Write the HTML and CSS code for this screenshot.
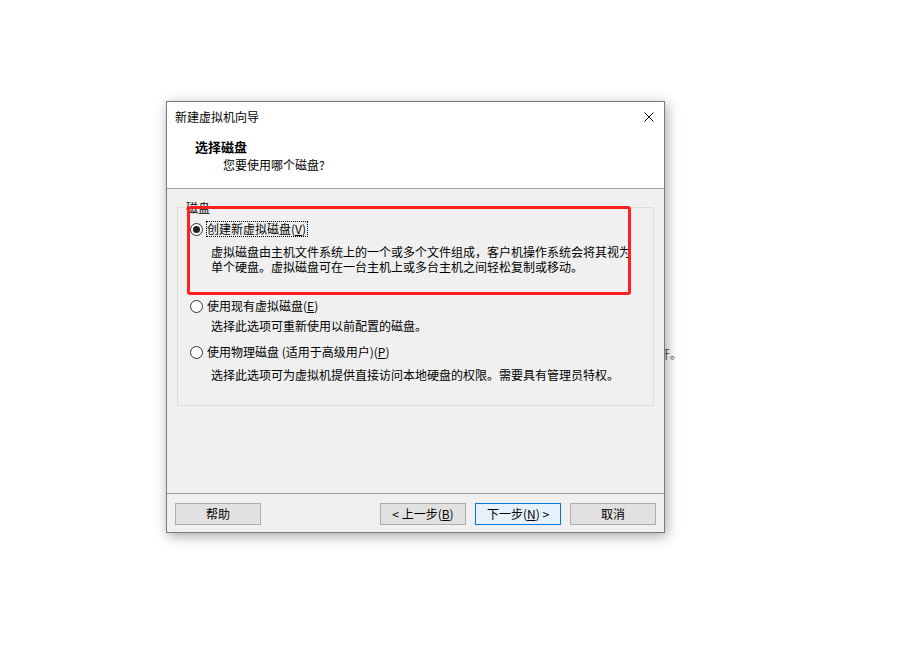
FILE: index.html
```html
<!DOCTYPE html>
<html lang="zh-CN">
<head>
<meta charset="utf-8">
<title>新建虚拟机向导</title>
<link rel="stylesheet" href="styles.css">
</head>
<body>
<div class="desktop">
  <div class="bg-text">打开。</div>
  <div class="dialog">
    <div class="header">
      <div class="titlebar">
        <span class="title">新建虚拟机向导</span>
        <svg class="close" width="10" height="10" viewBox="0 0 10 10"><path d="M0.5 0.5L9.5 9.5M9.5 0.5L0.5 9.5" stroke="#000" stroke-width="1" fill="none"/></svg>
      </div>
      <div class="heading">选择磁盘</div>
      <div class="subheading">您要使用哪个磁盘?</div>
    </div>
    <div class="body">
      <div class="group">
        <div class="group-label">磁盘</div>
        <div class="option opt1">
          <span class="radio checked"></span><span class="opt-text focus">创建新虚拟磁盘(<u>V</u>)</span>
        </div>
        <div class="desc desc1">虚拟磁盘由主机文件系统上的一个或多个文件组成，客户机操作系统会将其视为<br>单个硬盘。虚拟磁盘可在一台主机上或多台主机之间轻松复制或移动。</div>
        <div class="option opt2">
          <span class="radio"></span><span class="opt-text">使用现有虚拟磁盘(<u>E</u>)</span>
        </div>
        <div class="desc desc2">选择此选项可重新使用以前配置的磁盘。</div>
        <div class="option opt3">
          <span class="radio"></span><span class="opt-text">使用物理磁盘 (适用于高级用户)(<u>P</u>)</span>
        </div>
        <div class="desc desc3">选择此选项可为虚拟机提供直接访问本地硬盘的权限。需要具有管理员特权。</div>
      </div>
    </div>
    <div class="footer">
      <button class="btn help">帮助</button>
      <button class="btn">&lt; 上一步(<u>B</u>)</button>
      <button class="btn default">下一步(<u>N</u>) &gt;</button>
      <button class="btn">取消</button>
    </div>
    <div class="annot"></div>
  </div>
</div>
</body>
</html>
```
FILE: styles.css
```css
* { box-sizing: border-box; }
html, body {
  margin: 0;
  padding: 0;
  background: #ffffff;
}
body {
  font-family: "Noto Sans CJK SC", "Noto Sans", sans-serif;
  font-size: 12px;
  color: #000;
}
.desktop {
  position: relative;
  width: 923px;
  height: 652px;
  overflow: hidden;
}
.bg-text {
  position: absolute;
  left: 646px;
  top: 346px;
  line-height: 16px;
  color: #555;
}
.dialog {
  position: absolute;
  left: 166px;
  top: 101px;
  width: 499px;
  height: 432px;
  border: 1px solid #7a7a7a;
  background: #f0f0f0;
  display: flex;
  flex-direction: column;
  box-shadow: 2px 3px 12px rgba(0, 0, 0, 0.35);
}
.header {
  height: 87px;
  background: #ffffff;
  border-bottom: 1px solid #a0a0a0;
  flex: none;
}
.titlebar {
  height: 30px;
  display: flex;
  align-items: center;
  justify-content: space-between;
  padding: 0 10px 0 8px;
}
.title { line-height: 16px; }
.close { display: block; }
.heading {
  margin-top: 6px;
  padding-left: 28px;
  line-height: 18px;
  font-size: 13px;
  font-weight: bold;
}
.subheading {
  padding-left: 56px;
  line-height: 18px;
}
.body {
  flex: 1;
  padding: 18px 10px 0 10px;
}
.group {
  border: 1px solid #dcdcdc;
  height: 199px;
}
.group-label {
  margin: -8px 0 0 7px;
  width: fit-content;
  padding: 0 1px;
  background: #f0f0f0;
  line-height: 16px;
}
.option {
  display: flex;
  align-items: center;
  height: 16px;
  margin-left: 12px;
}
.opt1 { margin-top: 5px; }
.opt2 { margin-top: 24px; }
.opt3 { margin-top: 11px; }
.radio {
  width: 13px;
  height: 13px;
  border: 1px solid #333;
  border-radius: 50%;
  background: #fff;
  margin-right: 3px;
  display: flex;
  align-items: center;
  justify-content: center;
  flex: none;
}
.radio.checked::after {
  content: "";
  width: 7px;
  height: 7px;
  border-radius: 50%;
  background: #222;
}
.opt-text {
  line-height: 14px;
  border: 1px solid transparent;
  padding: 0 1px 0 0;
}
.opt-text.focus { border: 1px dotted #000; }
.desc {
  margin-left: 33px;
  line-height: 15px;
}
.desc1 { margin-top: 7px; }
.desc2 { margin-top: 4px; }
.desc3 { margin-top: 7px; }
.footer {
  flex: none;
  height: 39px;
  border-top: 1px solid #a0a0a0;
  padding: 9px 8px 0 8px;
  display: flex;
  align-items: flex-start;
  gap: 9px;
}
.btn {
  width: 86px;
  height: 22px;
  border: 1px solid #adadad;
  background: #e1e1e1;
  font-family: "Noto Sans CJK SC", "Noto Sans", sans-serif;
  font-size: 12px;
  color: #000;
  padding: 0;
  line-height: 20px;
}
.btn.help { margin-right: auto; }
.btn.default {
  border-color: #0078d7;
  background: #e5f1fb;
}
.annot {
  position: absolute;
  left: 20px;
  top: 104px;
  width: 444px;
  height: 89px;
  border: 3px solid #ff2020;
  border-radius: 3px;
  pointer-events: none;
}
```
